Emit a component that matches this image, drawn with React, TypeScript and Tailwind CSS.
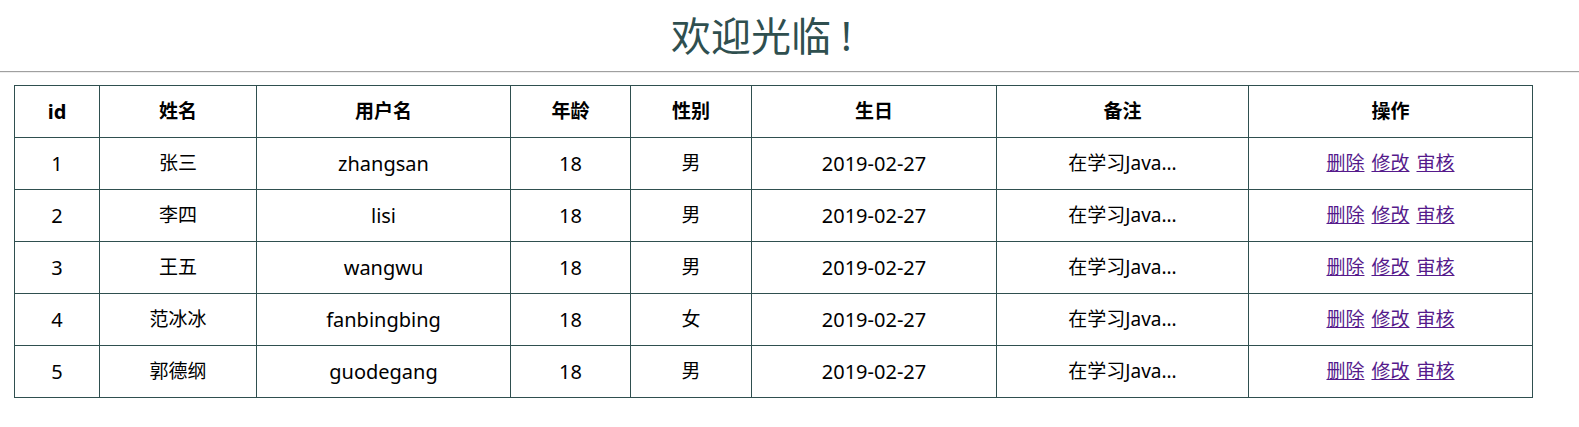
import React from "react";

const rows = [
  { id: 1, name: "张三", user: "zhangsan", age: 18, sex: "男" },
  { id: 2, name: "李四", user: "lisi", age: 18, sex: "男" },
  { id: 3, name: "王五", user: "wangwu", age: 18, sex: "男" },
  { id: 4, name: "范冰冰", user: "fanbingbing", age: 18, sex: "女" },
  { id: 5, name: "郭德纲", user: "guodegang", age: 18, sex: "男" },
];

const cell = "border border-[#2f4f4f] text-center p-0";

export default function App() {
  const font = { fontFamily: '"Noto Sans", "Noto Sans CJK SC", sans-serif' };
  return (
    <div className="bg-white w-[1579px] h-[427px] text-black" style={font}>
      <div className="h-[71px] flex items-center justify-center">
        <h1 className="text-[40px] leading-none text-[#2f4f4f] pr-[56px] font-normal">
          欢迎光临<span className="ml-[10px]">!</span>
        </h1>
      </div>
      <div className="border-t border-t-[#a0a0a0] border-b border-b-[#eeeeee]" />
      <div className="pt-[12px] pl-[14px]">
        <table className="table-fixed border-collapse border border-[#2f4f4f] w-[1518px] text-[19px]">
          <colgroup>
            <col className="w-[85px]" />
            <col className="w-[157px]" />
            <col className="w-[254px]" />
            <col className="w-[120px]" />
            <col className="w-[121px]" />
            <col className="w-[245px]" />
            <col className="w-[252px]" />
            <col className="w-[284px]" />
          </colgroup>
          <thead>
            <tr className="h-[52px]">
              <th className={`${cell} font-bold text-[20px]`}>id</th>
              {["姓名", "用户名", "年龄", "性别", "生日", "备注", "操作"].map((h) => (
                <th key={h} className={`${cell} font-bold`}>
                  {h}
                </th>
              ))}
            </tr>
          </thead>
          <tbody>
            {rows.map((r) => (
              <tr key={r.id} className="h-[52px]">
                <td className={`${cell} text-[20px]`}>{r.id}</td>
                <td className={cell}>{r.name}</td>
                <td className={`${cell} text-[20px]`}>{r.user}</td>
                <td className={`${cell} text-[20px]`}>{r.age}</td>
                <td className={cell}>{r.sex}</td>
                <td className={`${cell} text-[20px]`}>2019-02-27</td>
                <td className={cell}>在学习Java...</td>
                <td className={cell}>
                  <a href="#" className="text-[#551a8b] underline">删除</a>
                  <span className="inline-block w-[7px]" />
                  <a href="#" className="text-[#551a8b] underline">修改</a>
                  <span className="inline-block w-[7px]" />
                  <a href="#" className="text-[#551a8b] underline">审核</a>
                </td>
              </tr>
            ))}
          </tbody>
        </table>
      </div>
    </div>
  );
}
